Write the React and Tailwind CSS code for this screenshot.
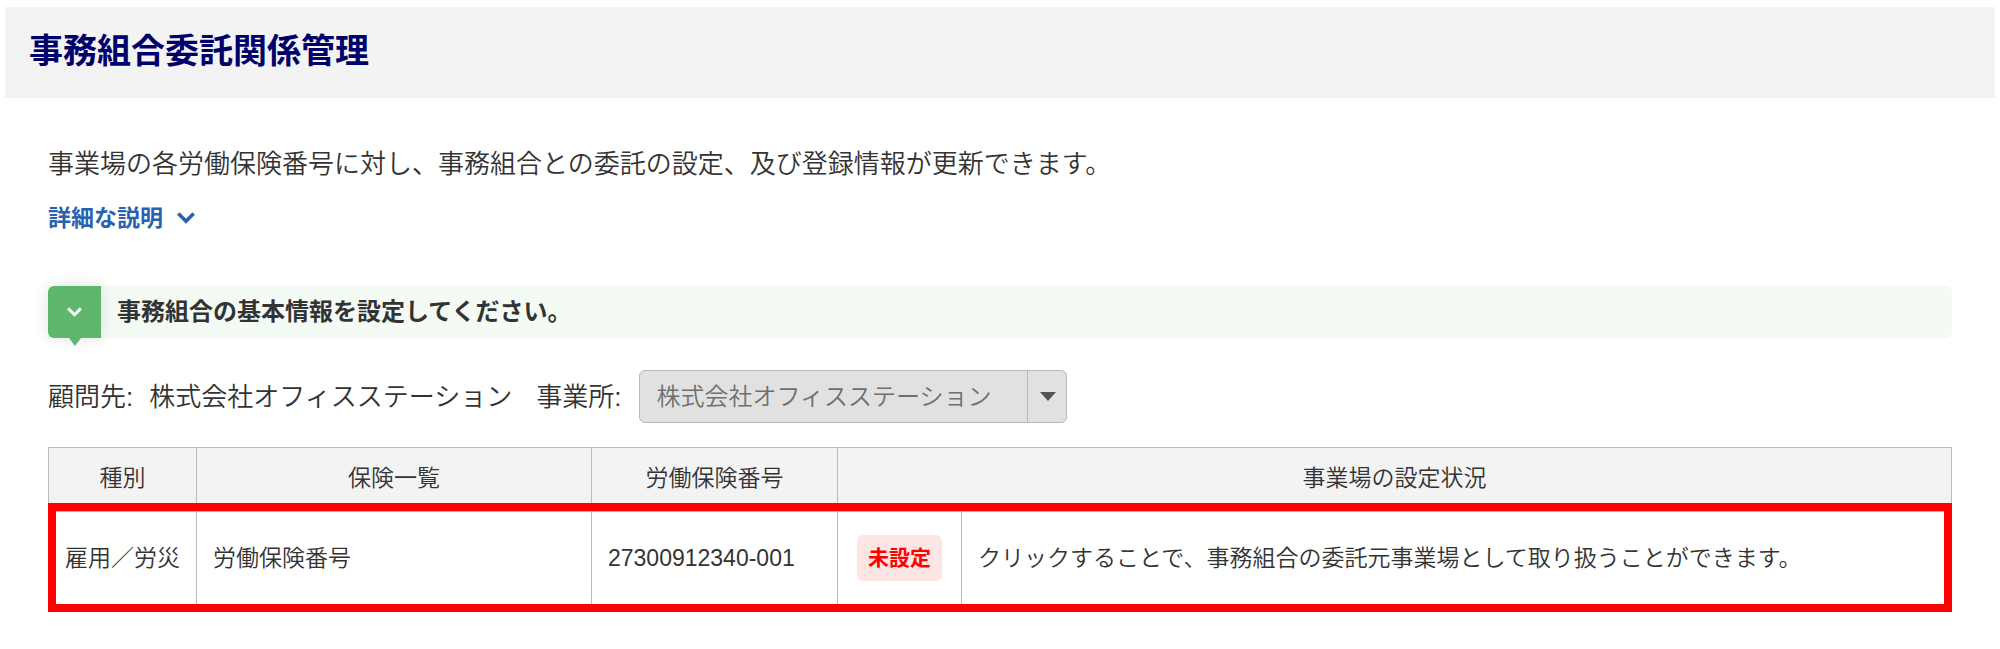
import { useState } from 'react';

const columns = [
  { label: '種別', span: 1 },
  { label: '保険一覧', span: 1 },
  { label: '労働保険番号', span: 1 },
  { label: '事業場の設定状況', span: 2 },
];

const rows = [
  {
    type: '雇用／労災',
    insurance: '労働保険番号',
    number: '27300912340-001',
    status: '未設定',
    note: 'クリックすることで、事務組合の委託元事業場として取り扱うことができます。',
  },
];

const Chevron = ({ className }) => (
  <svg viewBox="0 0 18 12" fill="none" stroke="currentColor" strokeWidth="3.6" className={className} aria-hidden="true">
    <path d="M1.3 1.6 L9 9.3 L16.7 1.6" />
  </svg>
);

const PageHeader = () => (
  <header className="mx-[5px] mt-[7px] bg-[#f3f3f3] px-6 pt-5 pb-[23px]">
    <h1 className="text-[34px] leading-[48px] font-bold text-[#00006b]">事務組合委託関係管理</h1>
  </header>
);

const StepBar = () => (
  <div className="mt-12 flex h-[52px] items-center rounded-md bg-[#f4fbf5]">
    <div className="relative flex h-full w-[53px] items-center justify-center rounded-l-md bg-[#5fb76e] text-white shadow-[0_0_16px_rgba(0,0,0,0.12)]">
      <Chevron className="w-[15px]" />
      <svg viewBox="0 0 12 8" className="absolute top-full left-1/2 w-3 -translate-x-1/2 fill-[#5fb76e]" aria-hidden="true">
        <path d="M0 0 H12 L6 8 Z" />
      </svg>
    </div>
    <h2 className="pl-4 text-2xl font-bold">事務組合の基本情報を設定してください。</h2>
  </div>
);

const OfficeSelector = () => (
  <div className="mt-8 flex items-center text-[26px] leading-10">
    <span>顧問先:</span>
    <span className="ml-4">株式会社オフィスステーション</span>
    <label htmlFor="office" className="ml-6">事業所:</label>
    <div className="relative ml-[18px]">
      <select
        id="office"
        disabled
        className="h-[53px] w-[428px] appearance-none rounded-md border border-[#b8b8b8] bg-[#e1e1e1] pr-12 pl-4 text-2xl text-[#707070] opacity-100"
      >
        <option>株式会社オフィスステーション</option>
      </select>
      <span className="pointer-events-none absolute inset-y-0 right-0 flex w-10 items-center justify-center border-l border-[#b8b8b8]">
        <svg viewBox="0 0 16 9" className="w-4 fill-[#555]" aria-hidden="true">
          <path d="M0 0 H16 L8 9 Z" />
        </svg>
      </span>
    </div>
  </div>
);

const InsuranceTable = () => (
  <div className="relative mt-6">
    <table className="w-full table-fixed border-collapse text-[23px] leading-8">
      <colgroup>
        <col className="w-[148px]" />
        <col className="w-[395px]" />
        <col className="w-[246px]" />
        <col className="w-[124px]" />
        <col />
      </colgroup>
      <thead>
        <tr className="h-16 bg-[#f3f3f3]">
          {columns.map((column) => (
            <th key={column.label} colSpan={column.span} className="border border-[#bbb] pb-1 font-[350]">
              {column.label}
            </th>
          ))}
        </tr>
      </thead>
      <tbody>
        {rows.map((row) => (
          <tr key={row.number} className="h-[100px]">
            <td className="border border-[#bbb] pb-2 text-center">{row.type}</td>
            <td className="border border-[#bbb] px-4 pb-2">{row.insurance}</td>
            <td className="border border-[#bbb] px-4 pb-2">{row.number}</td>
            <td className="border border-[#bbb] pb-2 text-center">
              <button type="button" className="h-[46px] rounded-md bg-[#fde5e5] px-[11px] text-[21px] font-bold text-[#ff0000]">
                {row.status}
              </button>
            </td>
            <td className="border border-[#bbb] px-4 pb-2">{row.note}</td>
          </tr>
        ))}
      </tbody>
    </table>
    {/* highlight around the body rows */}
    <div className="pointer-events-none absolute inset-x-0 top-14 bottom-0 border-8 border-[#ff0000]" />
  </div>
);

const App = () => {
  const [open, setOpen] = useState(false);

  return (
    <div className="flow-root bg-white font-['Liberation_Sans','Noto_Sans_CJK_JP',sans-serif] font-[350] text-[#333]" lang="ja">
      <PageHeader />
      <main className="px-12 pt-[46px] pb-9">
        <p className="text-[26px] leading-10">
          事業場の各労働保険番号に対し、事務組合との委託の設定、及び登録情報が更新できます。
        </p>
        <button
          type="button"
          aria-expanded={open}
          onClick={() => setOpen(!open)}
          className="mt-[14px] flex items-center gap-[14px] text-[23px] leading-10 font-bold text-[#2b62b0]"
        >
          詳細な説明
          <Chevron className="w-[18px]" />
        </button>
        <StepBar />
        <OfficeSelector />
        <InsuranceTable />
      </main>
    </div>
  );
};

export default App;
